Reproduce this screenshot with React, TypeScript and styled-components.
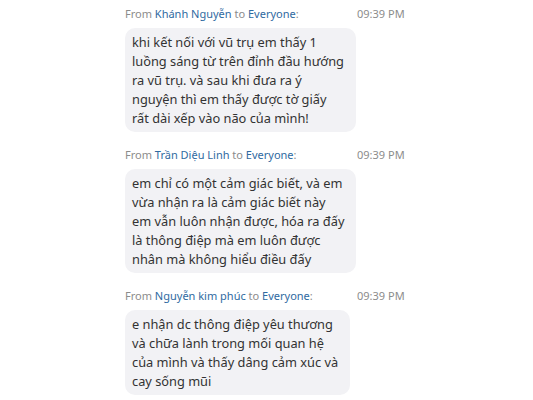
import React from "react";
import styled, { createGlobalStyle } from "styled-components";

const Global = createGlobalStyle`
  html, body { margin: 0; padding: 0; background: #ffffff; }
  body { font-family: "Noto Sans", "Open Sans", sans-serif; }
`;

const List = styled.div`
  display: flex;
  flex-direction: column;
  padding: 6px 0 0 125px;
  width: 533px;
  box-sizing: border-box;
`;

const Message = styled.div`
  display: flex;
  flex-direction: column;
  align-items: flex-start;
  margin-bottom: 15px;
`;

const Header = styled.div`
  display: grid;
  grid-template-columns: 232px auto;
  align-items: center;
  font-size: 11px;
  line-height: 16px;
  color: #8c8c8c;
  margin-bottom: 6px;
  white-space: nowrap;
`;

const Name = styled.span`
  color: #2f6aa1;
`;

const Time = styled.span`
  font-size: 11px;
  color: #8c8c8c;
`;

const Bubble = styled.div`
  background: #f2f2f5;
  border-radius: 10px;
  padding: 5px 12px 4px 7px;
  font-size: 12.8px;
  line-height: 19px;
  color: #333333;
`;

const Line = styled.div`
  white-space: nowrap;
`;

type Msg = { from: string; lines: string[] };

const messages: Msg[] = [
  {
    from: "Khánh Nguyễn",
    lines: [
      "khi kết nối với vũ trụ em thấy 1",
      "luồng sáng từ trên đỉnh đầu hướng",
      "ra vũ trụ. và sau khi đưa ra ý",
      "nguyện thì em thấy được tờ giấy",
      "rất dài xếp vào não của mình!",
    ],
  },
  {
    from: "Trần Diệu Linh",
    lines: [
      "em chỉ có một cảm giác biết, và em",
      "vừa nhận ra là cảm giác biết này",
      "em vẫn luôn nhận được, hóa ra đấy",
      "là thông điệp mà em luôn được",
      "nhân mà không hiểu điều đấy",
    ],
  },
  {
    from: "Nguyễn kim phúc",
    lines: [
      "e nhận dc thông điệp yêu thương",
      "và chữa lành trong mối quan hệ",
      "của mình và thấy dâng cảm xúc và",
      "cay sống mũi",
    ],
  },
];

export default function App() {
  return (
    <>
      <Global />
      <List>
        {messages.map((m) => (
          <Message key={m.from}>
            <Header>
              <span>
                From <Name>{m.from}</Name> to <Name>Everyone</Name>:
              </span>
              <Time>09:39 PM</Time>
            </Header>
            <Bubble>
              {m.lines.map((l) => (
                <Line key={l}>{l}</Line>
              ))}
            </Bubble>
          </Message>
        ))}
      </List>
    </>
  );
}
